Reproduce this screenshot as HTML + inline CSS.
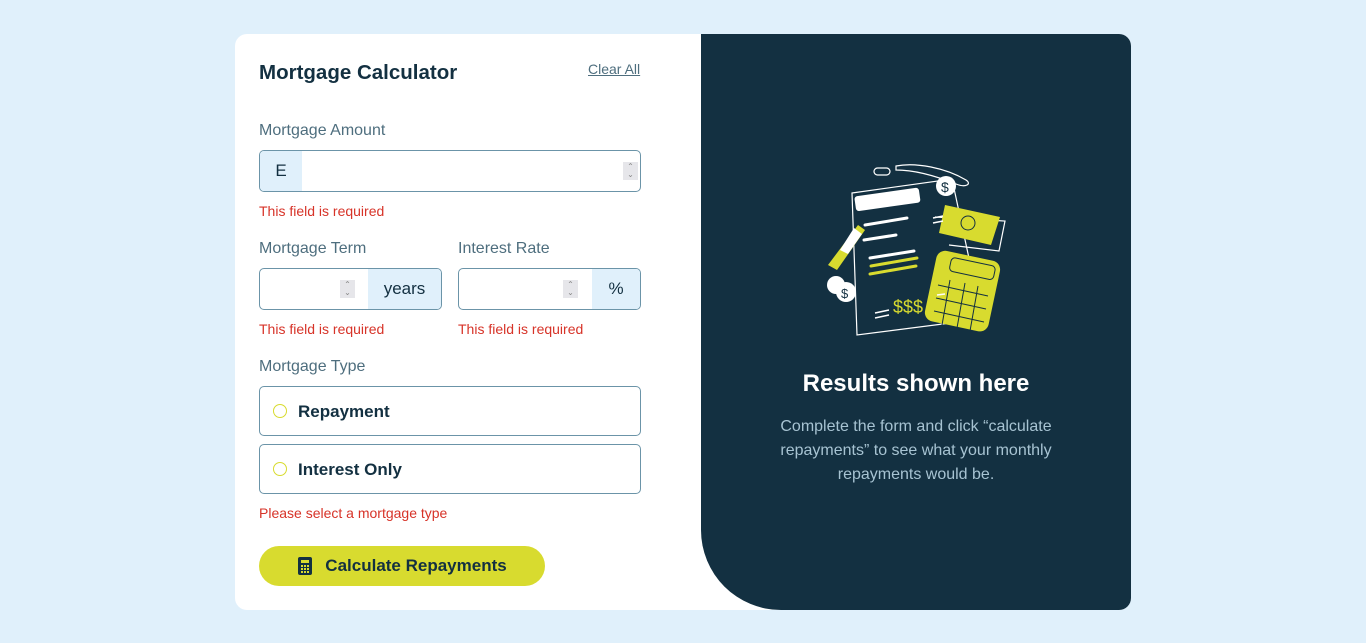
<!DOCTYPE html>
<html><head><style>
*{box-sizing:border-box;margin:0;padding:0}
body{width:1366px;height:643px;background:#e0f0fb;font-family:"Liberation Sans",sans-serif;position:relative;overflow:hidden}
.card{position:absolute;left:235px;top:34px;width:896px;height:576px;background:#fff;border-radius:12px}
.right{position:absolute;left:701px;top:34px;width:430px;height:576px;background:#133041;border-radius:0 12px 12px 80px}
.abs{position:absolute}
h1{position:absolute;left:259px;top:61px;font-size:20.5px;font-weight:bold;color:#133041}
.clear{left:588px;top:61px;font-size:14px;color:#4e6e7e;text-decoration:underline}
.lbl{font-size:16px;color:#4e6e7e}
.err{font-size:14px;color:#d73328}
.box{position:absolute;border:1px solid #6b94a8;border-radius:5px;overflow:hidden;background:#fff}
.addon{position:absolute;top:0;bottom:0;background:#e0f0fb;color:#133041;font-size:17px;display:flex;align-items:center;justify-content:center}
.spin{position:absolute;width:15px;height:18px;background:#e6e6ea;color:#888;font-size:8px;line-height:8px;text-align:center;padding-top:1px}
.radio{position:absolute;left:259px;width:382px;height:50px;border:1px solid #6b94a8;border-radius:5px}
.radio i{position:absolute;left:13px;top:17px;width:14px;height:14px;border:1.5px solid #d8db2f;border-radius:50%}
.radio span{position:absolute;left:38px;top:15px;font-size:17px;font-weight:bold;color:#133041}
.btn{position:absolute;left:259px;top:546px;width:286px;height:40px;background:#d8db2f;border-radius:20px;color:#133041;font-weight:bold;font-size:17px;display:flex;align-items:center;justify-content:center;gap:12px}
</style></head><body>
<div class="card"></div>
<div class="right"></div>
<h1>Mortgage Calculator</h1>
<div class="abs clear">Clear All</div>
<div class="abs lbl" style="left:259px;top:122px">Mortgage Amount</div>
<div class="box" style="left:259px;top:150px;width:382px;height:42px"><div class="addon" style="left:0;width:42px">E</div><div class="spin" style="right:2px;top:11px">⌃<br>⌄</div></div>
<div class="abs err" style="left:259px;top:203px">This field is required</div>
<div class="abs lbl" style="left:259px;top:240px">Mortgage Term</div>
<div class="abs lbl" style="left:458px;top:240px">Interest Rate</div>
<div class="box" style="left:259px;top:268px;width:183px;height:42px"><div class="spin" style="left:80px;top:11px">⌃<br>⌄</div><div class="addon" style="right:0;width:73px">years</div></div>
<div class="box" style="left:458px;top:268px;width:183px;height:42px"><div class="spin" style="left:104px;top:11px">⌃<br>⌄</div><div class="addon" style="right:0;width:48px">%</div></div>
<div class="abs err" style="left:259px;top:321px">This field is required</div>
<div class="abs err" style="left:458px;top:321px">This field is required</div>
<div class="abs lbl" style="left:259px;top:358px">Mortgage Type</div>
<div class="radio" style="top:386px"><i></i><span>Repayment</span></div>
<div class="radio" style="top:444px"><i></i><span>Interest Only</span></div>
<div class="abs err" style="left:259px;top:505px">Please select a mortgage type</div>
<div class="btn"><svg width="16" height="18" viewBox="0 0 16 18"><rect x="1" y="0" width="14" height="18" rx="2" fill="#133041"/><rect x="4" y="3" width="8" height="3" fill="#d8db2f"/><g fill="#d8db2f"><rect x="4" y="8" width="2" height="2"/><rect x="7" y="8" width="2" height="2"/><rect x="10" y="8" width="2" height="2"/><rect x="4" y="11" width="2" height="2"/><rect x="7" y="11" width="2" height="2"/><rect x="10" y="11" width="2" height="2"/><rect x="4" y="14" width="2" height="2"/><rect x="7" y="14" width="2" height="2"/><rect x="10" y="14" width="2" height="2"/></g></svg>Calculate Repayments</div>

<svg class="abs" style="left:800px;top:150px" width="220" height="200" viewBox="0 0 220 200">
<g fill="none" stroke="#fff" stroke-width="1.2">
<rect x="74" y="18" width="16" height="7" rx="3.5"/>
<path d="M96 16c20-4 50 2 70 14 6 4 0 8-10 4-20-8-40-14-60-14z"/>
<path d="M52 43l100-14 30 140-125 16z" />
<path d="M135 67l70 4-6 30-50-6"/>
</g>
<rect x="55" y="42" width="65" height="15" rx="3" fill="#fff" transform="rotate(-8 87 50)"/>
<g stroke="#fff" stroke-width="3" stroke-linecap="round"><path d="M65 75l42-7M64 90l32-5M70 108l44-7"/></g>
<g stroke="#d8db2f" stroke-width="3" stroke-linecap="round"><path d="M71 116l46-8M70 124l46-8"/></g>
<path d="M28 115l30-40 7 5-28 40z" fill="#d8db2f"/><path d="M40 100l14-22 8 6-14 20z" fill="#fff"/>
<circle cx="146" cy="36" r="10" fill="#fff"/><text x="141" y="42" font-size="14" fill="#133041" font-family="Liberation Sans">$</text>
<circle cx="36" cy="135" r="9" fill="#fff"/><circle cx="46" cy="142" r="10" fill="#fff"/><text x="41" y="148" font-size="13" fill="#133041" font-family="Liberation Sans">$</text>
<path d="M145 55l55 12-9 28-52-12z" fill="#d8db2f"/><circle cx="168" cy="73" r="7" fill="none" stroke="#133041"/>
<rect x="130" y="105" width="65" height="72" rx="9" fill="#d8db2f" transform="rotate(12 162 141)"/>
<g stroke="#133041" fill="none" stroke-width="1"><rect x="145" y="110" width="45" height="14" rx="4" transform="rotate(12 162 141)"/><path d="M138 135l50 11M136 148l50 11M134 161l50 11M150 130l-8 45M165 133l-8 45M178 136l-8 45"/></g>
<text x="93" y="163" font-size="18" fill="#d8db2f" font-family="Liberation Sans">$$$</text>
<g stroke="#fff" stroke-width="1.5"><path d="M75 163l14-3M75 168l14-3M133 68l10-2M133 73l10-2M137 145l8-1"/></g>
</svg>
<div class="abs" style="left:701px;width:430px;top:370px;text-align:center;color:#fff;font-size:24px;font-weight:bold">Results shown here</div>
<div class="abs" style="left:761px;width:310px;top:415px;text-align:center;color:#a7c3d2;font-size:16px;line-height:24px">Complete the form and click “calculate repayments” to see what your monthly repayments would be.</div>
</body></html>
